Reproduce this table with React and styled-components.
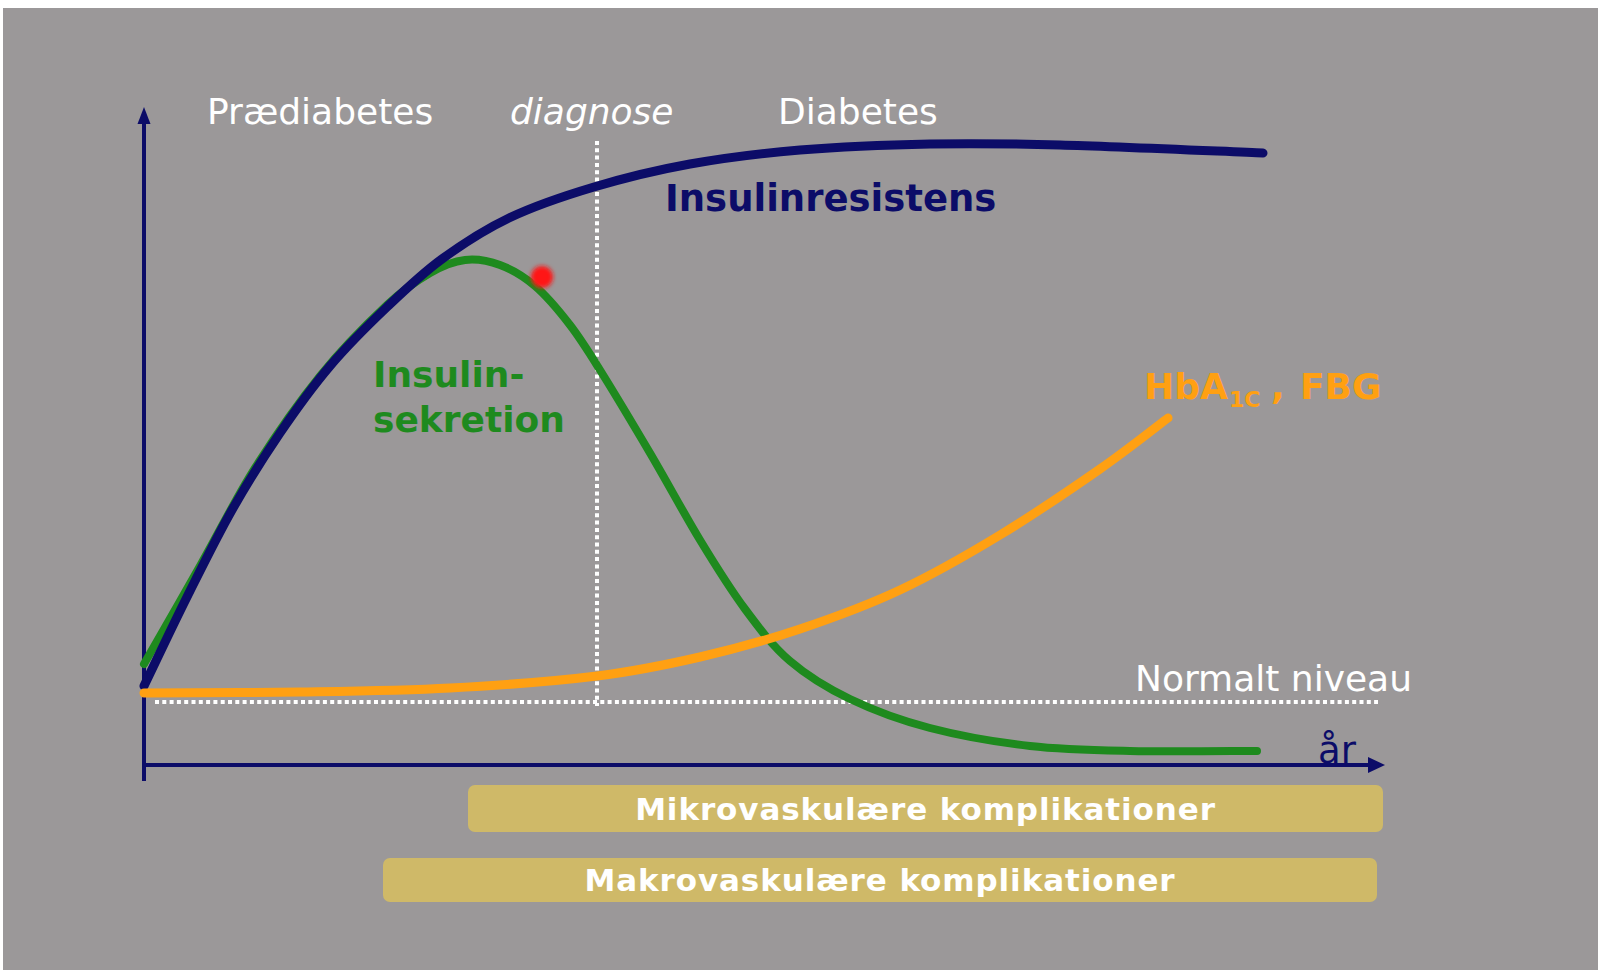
import styled, { createGlobalStyle } from "styled-components";

const GlobalStyle = createGlobalStyle`
  body {
    margin: 0;
    background: #ffffff;
    font-family: "DejaVu Sans", Verdana, sans-serif;
  }
`;

const colors = {
  slide: "#9b9899",
  navy: "#0c0c68",
  green: "#1e8a1e",
  orange: "#ffa012",
  band: "#cfb968",
  white: "#ffffff",
};

const Page = styled.div`
  padding: 8px 2px 4px 3px;
`;

const Slide = styled.div`
  width: 1595px;
  height: 962px;
  background: ${colors.slide};
  display: flex;
  flex-direction: column;
`;

const Chart = styled.svg`
  display: block;
  flex-shrink: 0;
`;

const Label = styled.text`
  font-family: "DejaVu Sans", Verdana, sans-serif;
  font-size: ${(p) => p.$size || 36}px;
  font-weight: ${(p) => (p.$bold ? 700 : 400)};
  font-style: ${(p) => (p.$italic ? "italic" : "normal")};
  fill: ${(p) => p.$color || colors.white};
`;

const Bands = styled.div`
  display: flex;
  flex-direction: column;
  gap: 26px;
`;

const Band = styled.div`
  margin-left: ${(p) => p.$offset}px;
  width: ${(p) => p.$width}px;
  height: ${(p) => p.$height}px;
  background: ${colors.band};
  border-radius: 7px;
  display: flex;
  align-items: center;
  justify-content: center;
  color: ${colors.white};
  font-family: "DejaVu Sans", Verdana, sans-serif;
  font-weight: 700;
  font-size: 31px;
  letter-spacing: 0.9px;
  white-space: nowrap;
`;

// catmull-rom -> cubic bezier
function smoothPath(pts) {
  const f = (p) => `${p[0].toFixed(1)},${p[1].toFixed(1)}`;
  let d = `M${f(pts[0])}`;
  for (let i = 0; i < pts.length - 1; i++) {
    const p0 = pts[i - 1] || pts[i];
    const p1 = pts[i];
    const p2 = pts[i + 1];
    const p3 = pts[i + 2] || p2;
    const c1 = [p1[0] + (p2[0] - p0[0]) / 6, p1[1] + (p2[1] - p0[1]) / 6];
    const c2 = [p2[0] - (p3[0] - p1[0]) / 6, p2[1] - (p3[1] - p1[1]) / 6];
    d += ` C${f(c1)} ${f(c2)} ${f(p2)}`;
  }
  return d;
}

const resistance = [
  [144, 686], [187, 597], [232, 510], [280, 433], [330, 366], [387, 307],
  [442, 259], [509, 218], [594, 187], [690, 164], [800, 150], [930, 144],
  [1060, 145], [1263, 153],
];

const secretion = [
  [144, 664], [200, 566], [255, 468], [320, 376], [387, 305], [430, 273],
  [465, 260], [500, 265], [535, 286], [570, 325], [600, 370], [650, 453],
  [700, 540], [745, 609], [790, 661], [850, 699], [930, 728], [1030, 746],
  [1130, 751], [1257, 751],
];

const glucose = [
  [144, 693], [300, 692], [450, 688], [597, 676], [700, 657], [800, 629],
  [900, 590], [1000, 535], [1100, 469], [1168, 418],
];

function DiseaseChart() {
  return (
    <Chart width="1595" height="777" viewBox="3 8 1595 777">
      <defs>
        <filter id="glow" x="-1" y="-1" width="3" height="3">
          <feGaussianBlur stdDeviation="2.2" />
        </filter>
      </defs>

      {/* axes */}
      <line x1="144" y1="120" x2="144" y2="781" stroke={colors.navy} strokeWidth="4" />
      <polygon points="144,107 137.5,124 150.5,124" fill={colors.navy} />
      <line x1="142" y1="765" x2="1372" y2="765" stroke={colors.navy} strokeWidth="4" />
      <polygon points="1385,765 1368,757 1368,773" fill={colors.navy} />

      {/* normal level + diagnosis marker */}
      <line x1="155" y1="702" x2="1378" y2="702" stroke={colors.white} strokeWidth="4" strokeDasharray="4 3.3" />
      <line x1="597" y1="141" x2="597" y2="706" stroke={colors.white} strokeWidth="4" strokeDasharray="4 3.3" />

      <path d={smoothPath(secretion)} fill="none" stroke={colors.green} strokeWidth="8" strokeLinecap="round" strokeLinejoin="round" />
      <path d={smoothPath(resistance)} fill="none" stroke={colors.navy} strokeWidth="9" strokeLinecap="round" strokeLinejoin="round" />
      <path d={smoothPath(glucose)} fill="none" stroke={colors.orange} strokeWidth="9" strokeLinecap="round" strokeLinejoin="round" />

      <circle cx="542" cy="277" r="11" fill="#ff1414" filter="url(#glow)" />

      <Label x="207" y="124">Prædiabetes</Label>
      <Label x="510" y="124" $italic>diagnose</Label>
      <Label x="778" y="124">Diabetes</Label>

      <Label x="665" y="211" $size={37} $bold $color={colors.navy}>Insulinresistens</Label>

      <Label x="373" y="387" $bold $color={colors.green}>Insulin-</Label>
      <Label x="373" y="432" $bold $color={colors.green}>sekretion</Label>

      <Label x="1144" y="399" $bold $color={colors.orange}>
        HbA
        <tspan x="1229" dy="8" fontSize="22">1C</tspan>
        <tspan x="1271" dy="-8">,</tspan>
        <tspan x="1300">FBG</tspan>
      </Label>

      <Label x="1135" y="691">Normalt niveau</Label>
      <Label x="1318" y="763" $size={37} $color={colors.navy}>år</Label>
    </Chart>
  );
}

export default function App() {
  return (
    <>
      <GlobalStyle />
      <Page>
        <Slide>
          <DiseaseChart />
          <Bands>
            <Band $offset={465} $width={915} $height={47}>
              Mikrovaskulære komplikationer
            </Band>
            <Band $offset={380} $width={994} $height={44}>
              Makrovaskulære komplikationer
            </Band>
          </Bands>
        </Slide>
      </Page>
    </>
  );
}
